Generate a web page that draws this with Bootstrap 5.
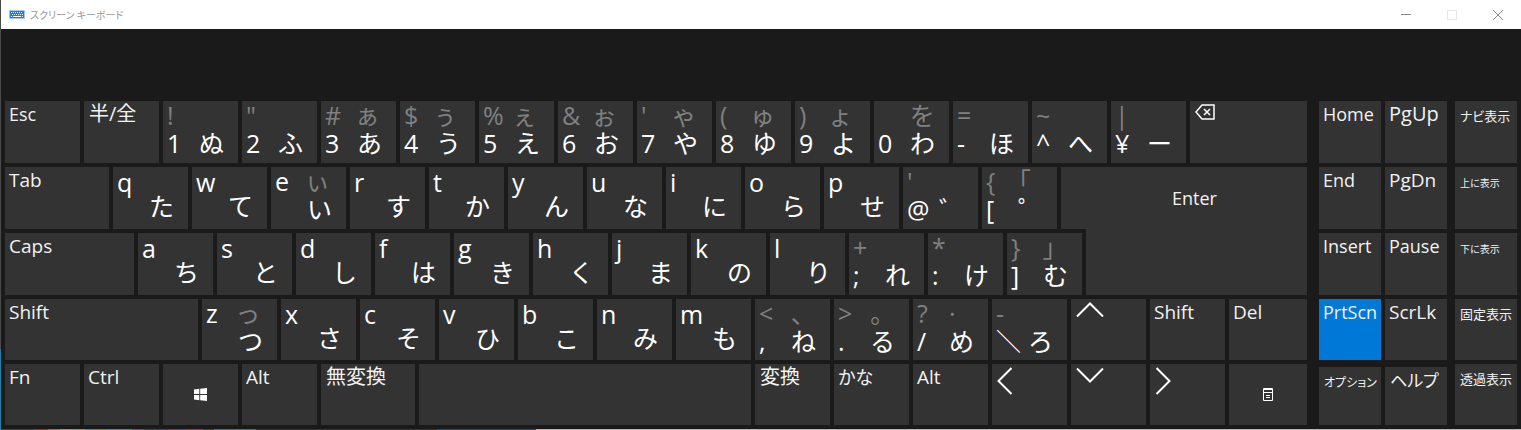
<!DOCTYPE html>
<html lang="ja">
<head>
<meta charset="utf-8">
<meta name="viewport" content="width=device-width, initial-scale=1">
<title>スクリーン キーボード</title>
<link href="https://cdn.jsdelivr.net/npm/bootstrap@5.3.0/dist/css/bootstrap.min.css" rel="stylesheet">
<style>
  body { background: #1a1a1a; font-family: "Open Sans", "Noto Sans CJK JP", sans-serif; }
  .osk { border-left: 1px solid; border-image: linear-gradient(#4a4a4a 81%, #1f7fa8 81%) 1; }
  .titlebar { height: 29px; background: #fff; color: #999; padding-left: 8px; }
  .titlebar h1 { font-family: "Noto Sans CJK JP", sans-serif; font-size: 10px; line-height: 16px; font-weight: 400; font-feature-settings: "palt"; padding-left: 5px; }
  .winbtn { width: 46px; height: 29px; border-radius: 0; color: #8a8a8a; }
  .winbtn.dim { color: #e6e6e6; }
  .board { gap: 12px; padding: 72px 4px 4px; }
  .rows { gap: 4px; }
  .main-keys { flex: 1302 1 0; }
  .side-keys { flex: 198 1 0; }
  .krow { display: flex; gap: 4px; height: 62px; }
  .krow.low { height: 61px; }

  .key { flex: 75 1 0; min-width: 0; display: block; position: relative; border: 0; padding: 0; border-radius: 0;
         background: #333; color: #fff; text-align: left; white-space: nowrap; }
  .key:hover, .key:active { background: #444 !important; color: #fff !important; }
  .key.on { background: #0078d7; }
  .g78 { flex-grow: 78; } .g94 { flex-grow: 94; } .g104 { flex-grow: 104; } .g117 { flex-grow: 117; }
  .g129 { flex-grow: 129; } .g193 { flex-grow: 193; } .g332 { flex-grow: 332; }
  .enter-gap { flex: 221 1 0; }
  .side-keys .key { flex-grow: 62; }
  .side-keys .key:last-child { margin-left: 4px; }
  .side-keys .short { margin-top: 3px; }

  /* the Enter key reaches down into the next row, a little narrower there */
  .enter { flex-grow: 246; z-index: 1; }
  .enter::after { content: ""; position: absolute; top: 100%; right: 0; width: 89.84%; height: calc(100% + 4px); background: inherit; }
  .enter .cap { padding: 18px 0 0 21px; text-align: center; font-size: 18px; }

  /* one-word captions */
  .cap { display: block; height: 100%; padding-left: 4px; font-size: 19px; line-height: 26px; color: #f2f2f2; font-feature-settings: "palt"; }
  .side-keys .cap { font-size: 18px; }
  .cap span { line-height: 1; }
  .cap .jp { padding-left: 1px; }
  .t20 { font-size: 20px; } .t19 { font-size: 19px; } .t18 { font-size: 18px; } .t17 { font-size: 17px; } .t13 { font-size: 13px; } .t12 { font-size: 12px; } .t10 { font-size: 10px; }

  /* keys with up to four legends */
  .duo { display: grid; grid-template-columns: 32px 1fr; grid-template-rows: 29px 27px; height: 100%; padding-left: 4px;
         font-size: 25px; line-height: 29px; }
  .duo i { font-style: normal; color: #808080; font-feature-settings: "palt"; }
  .duo > :nth-child(n+3) { line-height: 27px; }
  .duo.up { padding-top: 1px; grid-template-rows: 29px 19px; }
  .duo.up > :nth-child(n+3) { line-height: 19px; }

  .key svg, .winbtn svg, .titlebar svg { display: block; fill: none; stroke: currentColor; }
  .ico { display: block; height: 100%; padding: 3px 0 0 5px; }

  /* sliver of the desktop below the window */
  .desk { height: 1px; background: linear-gradient(90deg, #444 2.2%, #b02a2a 2.2% 3.1%, #b8692a 3.1% 3.9%, #a8a030 3.9% 4.7%, #7aa830 4.7% 5.5%, #35a045 5.5% 7%, #2a9a9a 7% 8.6%, #2a6ab0 8.6% 9.4%, #3a3aa8 9.4% 11%, #8a2aa0 11% 12.200%, #b02a70 12.200% 13.300%, #444 13.300% 14%, #1f7fa8 14% 16.800%, #333 16.800% 28.700%, #1f5080 28.700% 35.200%, #b4b4b4 35.200%); }
</style>
</head>
<body>
<div class="osk d-flex flex-column">
  <header class="titlebar d-flex align-items-center">
    <svg width="16" height="9" viewBox="0 0 16 9"><path d="M.5.5h15v8H.5z" fill="#1f7fd8" stroke="#a8c8e8"/><path d="M2 2.5h12M3 4.500h11" stroke="#fff" stroke-dasharray="1 1"/><path d="M2 6.500h1M4 6.500h8M13 6.500h1" stroke="#fff"/></svg>
    <h1 class="mb-0 me-auto">スクリーン キーボード</h1>
    <button class="btn winbtn p-0 border-0 d-flex align-items-center justify-content-center" aria-label="最小化"><svg width="10" height="10"><path d="M0 4.500h10"/></svg></button>
    <button class="btn winbtn dim p-0 border-0 d-flex align-items-center justify-content-center" aria-label="最大化"><svg width="10" height="10"><path d="M.5.5h9v9h-9z"/></svg></button>
    <button class="btn winbtn p-0 border-0 d-flex align-items-center justify-content-center" aria-label="閉じる"><svg width="10" height="10"><path d="M0 0l10 10M10 0L0 10"/></svg></button>
  </header>

  <main class="board d-flex">
    <div class="main-keys rows d-flex flex-column">
      <div class="krow">
        <button class="btn key"><span class="cap"><span class="t18">Esc</span></span></button>
        <button class="btn key"><span class="cap"><span class="t20 jp">半/全</span></span></button>
        <button class="btn key"><span class="duo"><i>!</i><i></i><b class="fw-normal">1</b><b class="fw-normal">ぬ</b></span></button>
        <button class="btn key"><span class="duo"><i>"</i><i></i><b class="fw-normal">2</b><b class="fw-normal">ふ</b></span></button>
        <button class="btn key"><span class="duo"><i>#</i><i>ぁ</i><b class="fw-normal">3</b><b class="fw-normal">あ</b></span></button>
        <button class="btn key"><span class="duo"><i>$</i><i>ぅ</i><b class="fw-normal">4</b><b class="fw-normal">う</b></span></button>
        <button class="btn key"><span class="duo"><i>%</i><i>ぇ</i><b class="fw-normal">5</b><b class="fw-normal">え</b></span></button>
        <button class="btn key"><span class="duo"><i>&amp;</i><i>ぉ</i><b class="fw-normal">6</b><b class="fw-normal">お</b></span></button>
        <button class="btn key"><span class="duo"><i>'</i><i>ゃ</i><b class="fw-normal">7</b><b class="fw-normal">や</b></span></button>
        <button class="btn key"><span class="duo"><i>(</i><i>ゅ</i><b class="fw-normal">8</b><b class="fw-normal">ゆ</b></span></button>
        <button class="btn key"><span class="duo"><i>)</i><i>ょ</i><b class="fw-normal">9</b><b class="fw-normal">よ</b></span></button>
        <button class="btn key"><span class="duo"><i></i><i>を</i><b class="fw-normal">0</b><b class="fw-normal">わ</b></span></button>
        <button class="btn key"><span class="duo"><i>=</i><i></i><b class="fw-normal">-</b><b class="fw-normal">ほ</b></span></button>
        <button class="btn key"><span class="duo"><i>~</i><i></i><b class="fw-normal">^</b><b class="fw-normal">へ</b></span></button>
        <button class="btn key"><span class="duo"><i>|</i><i></i><b class="fw-normal">¥</b><b class="fw-normal">ー</b></span></button>
        <button class="btn key g117" aria-label="Backspace"><span class="ico"><svg width="20" height="16" viewBox="0 0 20 16" stroke-width="1.500"><path d="M7 1h12v14H7L1 8zM9 5l6 6M15 5l-6 6"/></svg></span></button>
      </div>
      <div class="krow">
        <button class="btn key g104"><span class="cap">Tab</span></button>
        <button class="btn key"><span class="duo up"><b class="fw-normal">q</b><i></i><i></i><b class="fw-normal">た</b></span></button>
        <button class="btn key"><span class="duo up"><b class="fw-normal">w</b><i></i><i></i><b class="fw-normal">て</b></span></button>
        <button class="btn key"><span class="duo"><b class="fw-normal">e</b><i>ぃ</i><i></i><b class="fw-normal">い</b></span></button>
        <button class="btn key"><span class="duo up"><b class="fw-normal">r</b><i></i><i></i><b class="fw-normal">す</b></span></button>
        <button class="btn key"><span class="duo up"><b class="fw-normal">t</b><i></i><i></i><b class="fw-normal">か</b></span></button>
        <button class="btn key"><span class="duo up"><b class="fw-normal">y</b><i></i><i></i><b class="fw-normal">ん</b></span></button>
        <button class="btn key"><span class="duo up"><b class="fw-normal">u</b><i></i><i></i><b class="fw-normal">な</b></span></button>
        <button class="btn key"><span class="duo up"><b class="fw-normal">i</b><i></i><i></i><b class="fw-normal">に</b></span></button>
        <button class="btn key"><span class="duo up"><b class="fw-normal">o</b><i></i><i></i><b class="fw-normal">ら</b></span></button>
        <button class="btn key"><span class="duo up"><b class="fw-normal">p</b><i></i><i></i><b class="fw-normal">せ</b></span></button>
        <button class="btn key"><span class="duo"><i>'</i><i></i><b class="fw-normal">@</b><b class="fw-normal">゛</b></span></button>
        <button class="btn key"><span class="duo"><i>{</i><i>「</i><b class="fw-normal">[</b><b class="fw-normal">゜</b></span></button>
        <button class="btn key enter"><span class="cap">Enter</span></button>
      </div>
      <div class="krow">
        <button class="btn key g129"><span class="cap">Caps</span></button>
        <button class="btn key"><span class="duo up"><b class="fw-normal">a</b><i></i><i></i><b class="fw-normal">ち</b></span></button>
        <button class="btn key"><span class="duo up"><b class="fw-normal">s</b><i></i><i></i><b class="fw-normal">と</b></span></button>
        <button class="btn key"><span class="duo up"><b class="fw-normal">d</b><i></i><i></i><b class="fw-normal">し</b></span></button>
        <button class="btn key"><span class="duo up"><b class="fw-normal">f</b><i></i><i></i><b class="fw-normal">は</b></span></button>
        <button class="btn key"><span class="duo up"><b class="fw-normal">g</b><i></i><i></i><b class="fw-normal">き</b></span></button>
        <button class="btn key"><span class="duo up"><b class="fw-normal">h</b><i></i><i></i><b class="fw-normal">く</b></span></button>
        <button class="btn key"><span class="duo up"><b class="fw-normal">j</b><i></i><i></i><b class="fw-normal">ま</b></span></button>
        <button class="btn key"><span class="duo up"><b class="fw-normal">k</b><i></i><i></i><b class="fw-normal">の</b></span></button>
        <button class="btn key"><span class="duo up"><b class="fw-normal">l</b><i></i><i></i><b class="fw-normal">り</b></span></button>
        <button class="btn key"><span class="duo"><i>+</i><i></i><b class="fw-normal">;</b><b class="fw-normal">れ</b></span></button>
        <button class="btn key"><span class="duo"><i>*</i><i></i><b class="fw-normal">:</b><b class="fw-normal">け</b></span></button>
        <button class="btn key"><span class="duo"><i>}</i><i>」</i><b class="fw-normal">]</b><b class="fw-normal">む</b></span></button>
        <div class="enter-gap"></div>
      </div>
      <div class="krow low">
        <button class="btn key g193"><span class="cap">Shift</span></button>
        <button class="btn key"><span class="duo"><b class="fw-normal">z</b><i>っ</i><i></i><b class="fw-normal">つ</b></span></button>
        <button class="btn key"><span class="duo up"><b class="fw-normal">x</b><i></i><i></i><b class="fw-normal">さ</b></span></button>
        <button class="btn key"><span class="duo up"><b class="fw-normal">c</b><i></i><i></i><b class="fw-normal">そ</b></span></button>
        <button class="btn key"><span class="duo up"><b class="fw-normal">v</b><i></i><i></i><b class="fw-normal">ひ</b></span></button>
        <button class="btn key"><span class="duo up"><b class="fw-normal">b</b><i></i><i></i><b class="fw-normal">こ</b></span></button>
        <button class="btn key"><span class="duo up"><b class="fw-normal">n</b><i></i><i></i><b class="fw-normal">み</b></span></button>
        <button class="btn key"><span class="duo up"><b class="fw-normal">m</b><i></i><i></i><b class="fw-normal">も</b></span></button>
        <button class="btn key"><span class="duo"><i>&lt;</i><i>、</i><b class="fw-normal">,</b><b class="fw-normal">ね</b></span></button>
        <button class="btn key"><span class="duo"><i>&gt;</i><i>。</i><b class="fw-normal">.</b><b class="fw-normal">る</b></span></button>
        <button class="btn key"><span class="duo"><i>?</i><i>·</i><b class="fw-normal">/</b><b class="fw-normal">め</b></span></button>
        <button class="btn key"><span class="duo"><i>-</i><i></i><b class="fw-normal">＼</b><b class="fw-normal">ろ</b></span></button>
        <button class="btn key" aria-label="上"><span class="ico"><svg width="28" height="15" stroke-width="2"><path d="M1 14.500L14 1.500l13 13"/></svg></span></button>
        <button class="btn key"><span class="cap">Shift</span></button>
        <button class="btn key g78"><span class="cap">Del</span></button>
      </div>
      <div class="krow low">
        <button class="btn key"><span class="cap">Fn</span></button>
        <button class="btn key"><span class="cap">Ctrl</span></button>
        <button class="btn key" aria-label="Windows"><span class="d-flex h-100 align-items-center justify-content-center"><svg width="13" height="13" viewBox="0 0 13 13"><path fill="#fff" stroke="none" d="M0 1.500l5.300-.7v5.200H0zM6.200.7L13 0v6H6.200zM0 7h5.300v5.200L0 11.500zM6.200 7H13v6l-6.800-.7z"/></svg></span></button>
        <button class="btn key"><span class="cap">Alt</span></button>
        <button class="btn key g94"><span class="cap"><span class="t20 jp">無変換</span></span></button>
        <button class="btn key g332" aria-label="Space"></button>
        <button class="btn key"><span class="cap"><span class="t20 jp">変換</span></span></button>
        <button class="btn key"><span class="cap"><span class="t18">かな</span></span></button>
        <button class="btn key"><span class="cap">Alt</span></button>
        <button class="btn key" aria-label="左"><span class="ico"><svg width="15" height="28" stroke-width="2"><path d="M14.500 1L1.500 14l13 13"/></svg></span></button>
        <button class="btn key" aria-label="下"><span class="ico"><svg width="28" height="16" stroke-width="2"><path d="M1 1.500l13 13 13-13"/></svg></span></button>
        <button class="btn key" aria-label="右"><span class="ico"><svg width="16" height="28" stroke-width="2"><path d="M1.500 1l13 13-13 13"/></svg></span></button>
        <button class="btn key g78" aria-label="メニュー"><span class="d-flex h-100 align-items-center justify-content-center"><svg width="10" height="13" viewBox="0 0 10 13"><path d="M.5.5h9v12h-9zM0 1.500h10M0 4.500h10M3 7.500h4M3 9.500h4"/></svg></span></button>
      </div>
    </div>

    <div class="side-keys rows d-flex flex-column">
      <div class="krow">
        <button class="btn key"><span class="cap">Home</span></button>
        <button class="btn key"><span class="cap"><span class="t20">PgUp</span></span></button>
        <button class="btn key"><span class="cap"><span class="t13 jp">ナビ表示</span></span></button>
      </div>
      <div class="krow">
        <button class="btn key"><span class="cap">End</span></button>
        <button class="btn key"><span class="cap"><span class="t19">PgDn</span></span></button>
        <button class="btn key"><span class="cap"><span class="t10 jp">上に表示</span></span></button>
      </div>
      <div class="krow">
        <button class="btn key"><span class="cap">Insert</span></button>
        <button class="btn key"><span class="cap">Pause</span></button>
        <button class="btn key"><span class="cap"><span class="t10 jp">下に表示</span></span></button>
      </div>
      <div class="krow low">
        <button class="btn key on"><span class="cap">PrtScn</span></button>
        <button class="btn key"><span class="cap"><span class="t19">ScrLk</span></span></button>
        <button class="btn key"><span class="cap"><span class="t13 jp">固定表示</span></span></button>
      </div>
      <div class="krow low">
        <button class="btn key short"><span class="cap"><span class="t12 jp">オプション</span></span></button>
        <button class="btn key short"><span class="cap"><span class="t17 jp">ヘルプ</span></span></button>
        <button class="btn key"><span class="cap"><span class="t13 jp">透過表示</span></span></button>
      </div>
    </div>
  </main>
  <div class="desk"></div>
</div>
<script src="https://cdn.jsdelivr.net/npm/bootstrap@5.3.0/dist/js/bootstrap.bundle.min.js"></script>
</body>
</html>
